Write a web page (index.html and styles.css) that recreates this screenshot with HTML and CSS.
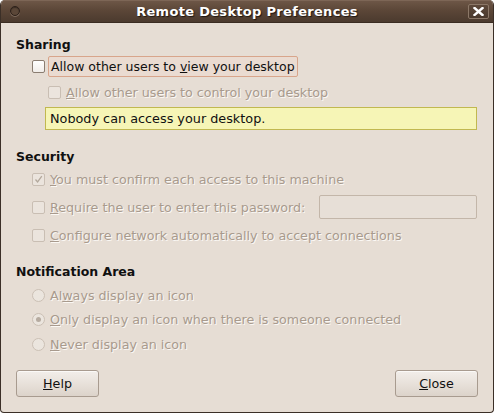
FILE: index.html
```html
<!DOCTYPE html>
<html>
<head>
<meta charset="utf-8">
<link rel="stylesheet" href="styles.css">
<title>Remote Desktop Preferences</title>
</head>
<body>
<div class="window">
  <div class="titlebar">
    <span class="menu-dot"></span>
    <span class="title">Remote Desktop Preferences</span>
    <span class="close-btn">
      <svg width="11" height="9" viewBox="0 0 11 9"><path d="M1.5 1 L9.5 8 M9.5 1 L1.5 8" stroke="#fff" stroke-width="2.4" stroke-linecap="square"/></svg>
    </span>
  </div>
  <div class="content">
    <div class="heading first">Sharing</div>
    <div class="row row-main">
      <span class="check"></span>
      <span class="focus-label">Allow other users to <u>v</u>iew your desktop</span>
    </div>
    <div class="row row-sub disabled">
      <span class="check off"></span>
      <span class="label"><u>A</u>llow other users to control your desktop</span>
    </div>
    <div class="notice">Nobody can access your desktop.</div>

    <div class="heading security">Security</div>
    <div class="row row-sec first-sec disabled">
      <span class="check off checked">
        <svg width="9" height="9" viewBox="0 0 9 9"><path d="M1.5 4.5 L3.6 7 L7.8 1.2" fill="none" stroke="#b3a89c" stroke-width="1.3"/></svg>
      </span>
      <span class="label"><u>Y</u>ou must confirm each access to this machine</span>
    </div>
    <div class="row row-sec disabled">
      <span class="check off"></span>
      <span class="label"><u>R</u>equire the user to enter this password:</span>
      <span class="entry"></span>
    </div>
    <div class="row row-sec disabled">
      <span class="check off"></span>
      <span class="label"><u>C</u>onfigure network automatically to accept connections</span>
    </div>

    <div class="heading notif">Notification Area</div>
    <div class="row row-radio first-radio disabled">
      <span class="radio"></span>
      <span class="label">Al<u>w</u>ays display an icon</span>
    </div>
    <div class="row row-radio disabled">
      <span class="radio selected"></span>
      <span class="label"><u>O</u>nly display an icon when there is someone connected</span>
    </div>
    <div class="row row-radio disabled">
      <span class="radio"></span>
      <span class="label"><u>N</u>ever display an icon</span>
    </div>

    <div class="buttons">
      <span class="button"><u>H</u>elp</span>
      <span class="button"><u>C</u>lose</span>
    </div>
  </div>
</div>
</body>
</html>
```

FILE: styles.css
```css
html, body {
  margin: 0;
  padding: 0;
  background: #ffffff;
}
body {
  width: 494px;
  height: 413px;
  font-family: "DejaVu Sans", sans-serif;
  font-size: 12.7px;
  color: #101010;
}
.window {
  width: 494px;
  height: 413px;
  box-sizing: border-box;
  border: 1px solid #3b2f27;
  border-top: none;
  border-radius: 5px 5px 4px 4px;
  background: #e6ddd4;
  overflow: hidden;
  display: flex;
  flex-direction: column;
}
.titlebar {
  position: relative;
  height: 23px;
  flex: none;
  box-sizing: border-box;
  border-bottom: 1px solid #3a2c22;
  background: linear-gradient(#6f5848 0%, #5c4738 45%, #4b3a2e 100%);
  box-shadow: inset 0 1px 0 #7d6656;
  display: flex;
  align-items: center;
  justify-content: center;
}
.title {
  color: #ffffff;
  font-weight: bold;
  font-size: 13px;
  letter-spacing: 0.3px;
  text-shadow: 1px 1px 1px #1e1611;
}
.menu-dot {
  position: absolute;
  left: 9px;
  top: 6px;
  width: 8px;
  height: 8px;
  border-radius: 50%;
  border: 1px solid #2c2019;
  box-shadow: 0 1px 0 #7e6a5c, inset 0 1px 1px #3a2d24;
  background: #5b4738;
}
.close-btn {
  position: absolute;
  right: 4px;
  top: 4px;
  width: 19px;
  height: 13px;
  border: 1px solid #8c7868;
  border-radius: 2px;
  background: linear-gradient(#5e493a, #4a392d);
  display: flex;
  align-items: center;
  justify-content: center;
}
.close-btn svg {
  display: block;
}
.content {
  flex: 1;
  display: flex;
  flex-direction: column;
  padding: 14px 15px 15px 15px;
}
.heading {
  font-weight: bold;
  font-size: 12.5px;
  height: 16px;
  line-height: 16px;
}
.heading.security {
  margin-top: 19px;
}
.heading.notif {
  margin-top: 15px;
}
.row {
  display: flex;
  align-items: center;
}
.row-main {
  margin-top: 3px;
  height: 21px;
  margin-left: 16px;
}
.row-sub {
  height: 20px;
  margin-top: 5px;
  margin-left: 32px;
}
.row-sec {
  height: 28px;
  margin-left: 16px;
}
.row-sec.first-sec {
  margin-top: 0px;
}
.row-radio {
  height: 24.5px;
  margin-left: 16px;
}
.row-radio.first-radio {
  margin-top: 3px;
}
.check {
  flex: none;
  width: 11px;
  height: 11px;
  border: 1px solid #8a7d71;
  border-radius: 2px;
  background: linear-gradient(#ffffff, #f1ede9);
  display: flex;
  align-items: center;
  justify-content: center;
}
.check.off {
  border-color: #c9beb3;
  background: #ebe4dd;
}
.check svg {
  display: block;
}
.radio {
  flex: none;
  width: 11px;
  height: 11px;
  border: 1px solid #cbc0b5;
  border-radius: 50%;
  background: #ebe5de;
  position: relative;
}
.radio.selected::after {
  content: "";
  position: absolute;
  left: 3px;
  top: 3px;
  width: 5px;
  height: 5px;
  border-radius: 50%;
  background: #b6aba0;
}
.focus-label {
  margin-left: 3px;
  height: 19px;
  line-height: 19px;
  padding: 0 2px 0 2px;
  border: 1px solid #d8a58b;
  border-radius: 2px;
  background: #eadbd1;
  font-size: 12.5px;
}
.label {
  margin-left: 5px;
}
.disabled {
  color: #a89a8d;
  text-shadow: 1px 1px 0 #fbf8f4;
}
.notice {
  margin-top: 5px;
  margin-left: 29px;
  margin-right: 1px;
  height: 21px;
  line-height: 21px;
  padding-left: 4px;
  border: 1px solid #c1b850;
  background: #f6f5b6;
  color: #101010;
  font-size: 12.8px;
}
.entry {
  margin-left: auto;
  margin-right: 1px;
  width: 156px;
  height: 22px;
  border: 1px solid #c3b6a9;
  border-radius: 2px;
  background: #e7dfd7;
}
.buttons {
  margin-top: auto;
  display: flex;
  justify-content: space-between;
}
.button {
  width: 81px;
  height: 25px;
  border: 1px solid #a89b8f;
  border-radius: 3px;
  background: linear-gradient(#f2eeea 0%, #e8e1da 50%, #dcd3ca 100%);
  box-shadow: inset 0 1px 0 #fbf9f7;
  display: flex;
  align-items: center;
  justify-content: center;
  color: #101010;
}
```
